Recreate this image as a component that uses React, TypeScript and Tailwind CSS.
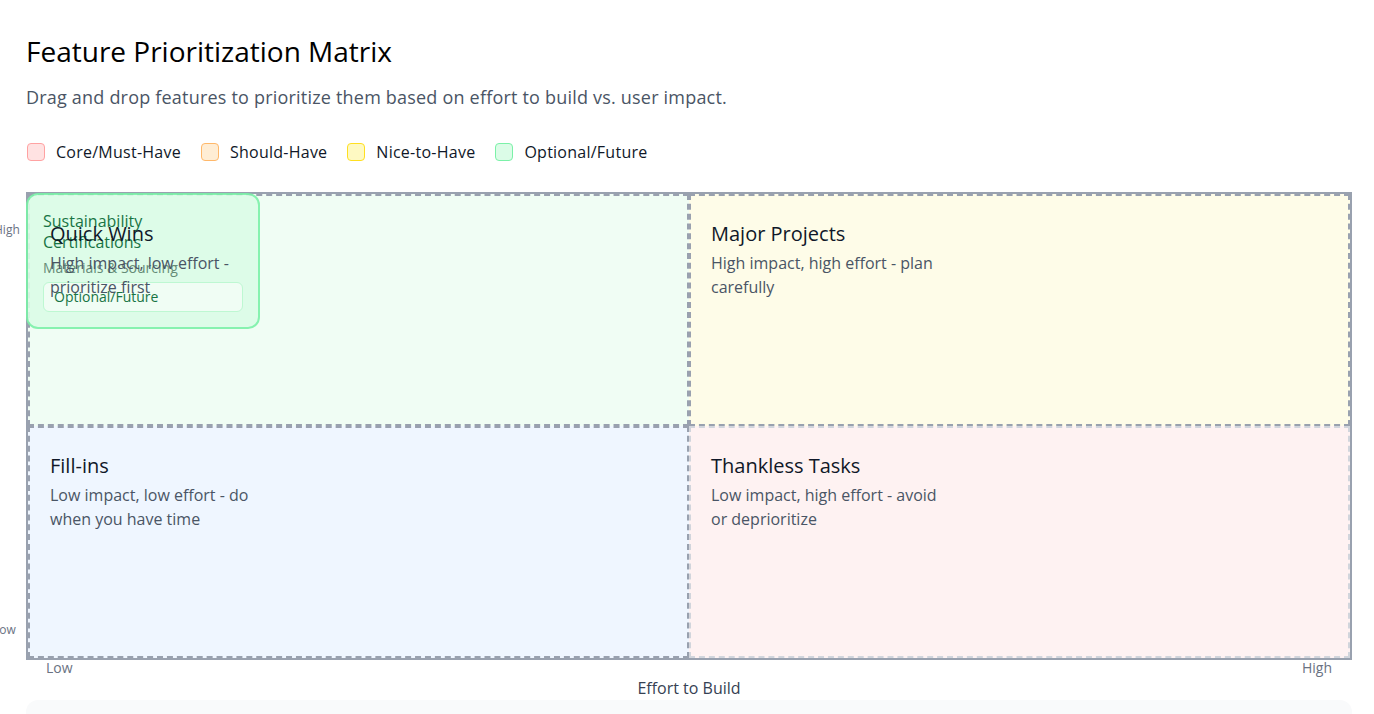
import React from "react";

const legend = [
  { label: "Core/Must-Have", cls: "bg-red-100 border-red-300" },
  { label: "Should-Have", cls: "bg-orange-100 border-orange-300" },
  { label: "Nice-to-Have", cls: "bg-yellow-100 border-yellow-300" },
  { label: "Optional/Future", cls: "bg-green-100 border-green-300" },
];

const quadrants = [
  {
    title: "Quick Wins",
    desc: "High impact, low effort - prioritize first",
    cls: "bg-green-50 border-gray-400",
  },
  {
    title: "Major Projects",
    desc: "High impact, high effort - plan carefully",
    cls: "bg-yellow-50 border-gray-400",
  },
  {
    title: "Fill-ins",
    desc: "Low impact, low effort - do when you have time",
    cls: "bg-blue-50 border-gray-400",
  },
  {
    title: "Thankless Tasks",
    desc: "Low impact, high effort - avoid or deprioritize",
    cls: "bg-red-50 border-gray-300",
  },
];

export default function App() {
  return (
    <div
      className="min-h-screen bg-white pl-[26px] pr-[22px] pt-[33px]"
      style={{ fontFamily: "'Open Sans', 'Noto Sans', sans-serif" }}
    >
      <h1 className="text-[28px] leading-9 text-black">Feature Prioritization Matrix</h1>
      <p className="mt-[14px] text-lg leading-7 tracking-[0.2px] text-gray-600">
        Drag and drop features to prioritize them based on effort to build vs. user impact.
      </p>

      <div className="mt-[29px] flex items-center gap-5 pl-px">
        {legend.map((l) => (
          <div key={l.label} className="flex items-center gap-[11px]">
            <span className={`h-[18px] w-[18px] rounded border ${l.cls}`} />
            <span className="text-base leading-6 tracking-[0.25px] text-gray-900">{l.label}</span>
          </div>
        ))}
      </div>

      <div className="relative mt-[28px] h-[468px] border-2 border-gray-400">
        <span className="absolute left-[-34px] top-7 text-xs leading-4 text-gray-500">High</span>
        <span className="absolute bottom-5 left-[-35px] text-xs leading-4 text-gray-500">Low</span>

        <div className="grid h-full grid-cols-2 grid-rows-2">
          {quadrants.map((q) => (
            <div key={q.title} className={`border-2 border-dashed px-5 pt-6 ${q.cls}`}>
              <div className="relative z-10">
                <h2 className="text-xl leading-7 text-gray-900">{q.title}</h2>
                <p className="mt-[3px] max-w-60 text-base leading-6 text-gray-600">{q.desc}</p>
              </div>
            </div>
          ))}
        </div>

        <div className="absolute left-[-2px] top-[-1px] w-[234px] rounded-xl border-2 border-green-300 bg-green-100 px-[15px] pt-[16px] pb-[15px] opacity-90">
          <div className="text-base leading-[21px] text-green-800">Sustainability Certifications</div>
          <div className="mt-[5px] text-sm leading-5 text-[#56806a]">Materials &amp; Sourcing</div>
          <div className="mt-1 rounded-md border border-green-200 bg-green-50 px-2.5 py-1 text-sm leading-5 text-green-800">
            Optional/Future
          </div>
        </div>
      </div>

      <div className="flex justify-between px-5 text-sm leading-4 text-gray-500">
        <span>Low</span>
        <span>High</span>
      </div>
      <div className="text-center text-base leading-6 text-gray-700">Effort to Build</div>

      <div className="h-40 rounded-xl bg-gray-50" />
    </div>
  );
}
